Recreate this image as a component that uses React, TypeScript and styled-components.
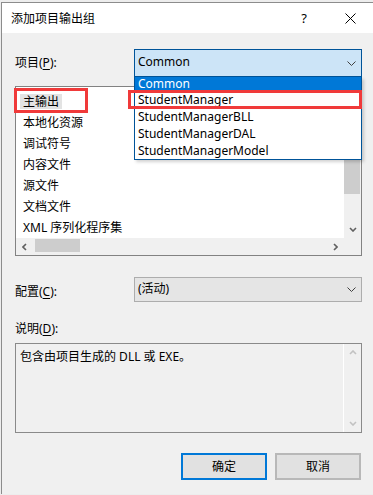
import React from 'react';
import styled, { createGlobalStyle } from 'styled-components';

const GlobalStyle = createGlobalStyle`
  html, body {
    margin: 0;
    padding: 0;
    background: #ededed;
  }
  body {
    font-family: "Noto Sans", "Noto Sans CJK SC", sans-serif;
    font-size: 12px;
    color: #000;
  }
`;

const projects = ['Common', 'StudentManager', 'StudentManagerBLL', 'StudentManagerDAL', 'StudentManagerModel'];
const outputs = ['主输出', '本地化资源', '调试符号', '内容文件', '源文件', '文档文件', 'XML 序列化程序集'];

type Dir = 'up' | 'down' | 'left' | 'right';

const Chevron = ({ dir, color = '#606060', width = 1.6 }: { dir: Dir; color?: string; width?: number }) => {
  const pts: Record<Dir, string> = {
    down: '1,1 4,4 7,1',
    up: '1,4 4,1 7,4',
    right: '1,1 4,4 1,7',
    left: '4,1 1,4 4,7',
  };
  const horizontal = dir === 'left' || dir === 'right';
  return (
    <svg width={horizontal ? 5 : 8} height={horizontal ? 8 : 5} viewBox={horizontal ? '0 0 5 8' : '0 0 8 5'}>
      <polyline points={pts[dir]} fill="none" stroke={color} strokeWidth={width} />
    </svg>
  );
};

const ComboArrow = () => (
  <svg width="9" height="5" viewBox="0 0 9 5">
    <polyline points="0.5,0.5 4.5,4.5 8.5,0.5" fill="none" stroke="#404040" strokeWidth="1" />
  </svg>
);

const App = () => {
  return (
    <>
      <GlobalStyle />
      <Window>
        <TitleBar>
          <Title>添加项目输出组</Title>
          <CaptionButton>?</CaptionButton>
          <CaptionButton>
            <svg width="11" height="11" viewBox="0 0 11 11">
              <line x1="0.5" y1="0.5" x2="10.5" y2="10.5" stroke="#000" strokeWidth="1" />
              <line x1="10.5" y1="0.5" x2="0.5" y2="10.5" stroke="#000" strokeWidth="1" />
            </svg>
          </CaptionButton>
        </TitleBar>

        <Body>
          <FieldRow>
            <Label>
              项目(<u>P</u>):
            </Label>
            <ComboWrap>
              <Combo $open>
                <span>Common</span>
                <ComboArrow />
              </Combo>
              <DropList>
                {projects.map((p, i) => (
                  <DropItem key={p} $active={i === 0}>
                    {p}
                  </DropItem>
                ))}
              </DropList>
              <Mark style={{ left: -6, top: 41, width: 234, height: 19 }} />
            </ComboWrap>
          </FieldRow>

          <ListBox>
            <ListItems>
              {outputs.map((o, i) => (
                <ListRow key={o}>
                  <ListText $selected={i === 0}>{o}</ListText>
                </ListRow>
              ))}
            </ListItems>
            <VScroll>
              <ScrollArrow>
                <Chevron dir="up" />
              </ScrollArrow>
              <VThumb />
              <Track />
              <ScrollArrow>
                <Chevron dir="down" />
              </ScrollArrow>
            </VScroll>
            <HScroll>
              <ScrollArrow>
                <Chevron dir="left" />
              </ScrollArrow>
              <HThumb />
              <Track />
              <ScrollArrow>
                <Chevron dir="right" />
              </ScrollArrow>
            </HScroll>
            <Corner />
            <Mark style={{ left: -2, top: 1, width: 74, height: 25 }} />
          </ListBox>

          <FieldRow $config>
            <Label $low>
              配置(<u>C</u>):
            </Label>
            <ComboWrap>
              <Combo>
                <span>(活动)</span>
                <ComboArrow />
              </Combo>
            </ComboWrap>
          </FieldRow>

          <SectionLabel>
            说明(<u>D</u>):
          </SectionLabel>
          <DescBox>
            <DescText>包含由项目生成的 DLL 或 EXE。</DescText>
            <DescScroll>
              <ScrollArrow>
                <Chevron dir="up" color="#c2c2c2" />
              </ScrollArrow>
              <Track />
              <ScrollArrow>
                <Chevron dir="down" color="#c2c2c2" />
              </ScrollArrow>
            </DescScroll>
          </DescBox>

          <Buttons>
            <Button $primary>确定</Button>
            <Button>取消</Button>
          </Buttons>
        </Body>
      </Window>
    </>
  );
};

export default App;

const Window = styled.div`
  margin: 2px 0 0 1px;
  border-left: 1px solid #8c8c8c;
  border-top: 1px solid #8c8c8c;
  background: #f0f0f0;
  height: calc(100vh - 3px);
  overflow: hidden;
  box-sizing: border-box;
`;

const TitleBar = styled.div`
  height: 30px;
  background: #fff;
  display: flex;
  align-items: center;
  padding-left: 9px;
`;

const Title = styled.div`
  flex: 1;
  font-family: "Noto Sans CJK SC", sans-serif;
  font-size: 12px;
  line-height: 16px;
`;

const CaptionButton = styled.div`
  width: 46px;
  height: 30px;
  display: flex;
  align-items: center;
  justify-content: center;
  font-size: 13px;
  color: #000;
`;

const Body = styled.div`
  padding: 16px 11px 0 13px;
  display: flex;
  flex-direction: column;
`;

const FieldRow = styled.div<{ $config?: boolean }>`
  display: flex;
  align-items: center;
  height: ${(p) => (p.$config ? '25px' : '28px')};
  margin-top: ${(p) => (p.$config ? '21px' : '0')};
`;

const Label = styled.div<{ $low?: boolean }>`
  width: 119px;
  line-height: 16px;
  padding-top: ${(p) => (p.$low ? '4px' : '0')};
  u {
    text-underline-offset: 2px;
  }
`;

const SectionLabel = styled.div`
  margin-top: 19px;
  line-height: 16px;
  u {
    text-underline-offset: 2px;
  }
`;

const ComboWrap = styled.div`
  position: relative;
  flex: 1;
  height: 100%;
`;

const Combo = styled.div<{ $open?: boolean }>`
  height: 100%;
  box-sizing: border-box;
  display: flex;
  align-items: center;
  justify-content: space-between;
  padding: 0 5px 0 3px;
  border: 1px solid ${(p) => (p.$open ? '#005499' : '#adadad')};
  background: ${(p) => (p.$open ? '#cce4f7' : '#e5e5e5')};
  line-height: 16px;
  span {
    padding-bottom: 2px;
  }
`;

const DropList = styled.div`
  position: absolute;
  top: 100%;
  left: 0;
  right: 0;
  z-index: 2;
  background: #fff;
  border: 1px solid #005499;
  border-top: none;
  box-shadow: 2px 2px 3px rgba(0, 0, 0, 0.18);
`;

const DropItem = styled.div<{ $active?: boolean }>`
  height: 17px;
  line-height: 17px;
  padding-left: 3px;
  background: ${(p) => (p.$active ? '#0078d7' : '#fff')};
  color: ${(p) => (p.$active ? '#fff' : '#000')};
  &:first-child {
    height: 14px;
    line-height: 14px;
  }
`;

const Mark = styled.div`
  position: absolute;
  box-sizing: border-box;
  border: 3px solid #f03a3a;
  z-index: 3;
  pointer-events: none;
`;

const ListBox = styled.div`
  position: relative;
  margin-top: 9px;
  height: 170px;
  box-sizing: border-box;
  border: 1px solid #828282;
  background: #fff;
  display: grid;
  grid-template-columns: 1fr 17px;
  grid-template-rows: 1fr 17px;
`;

const ListItems = styled.div`
  padding-top: 4px;
  overflow: hidden;
`;

const ListRow = styled.div`
  height: 21px;
  display: flex;
  align-items: center;
  padding-left: 4px;
`;

const ListText = styled.span<{ $selected?: boolean }>`
  height: 15px;
  line-height: 15px;
  padding: 0 3px;
  background: ${(p) => (p.$selected ? '#e3e3e3' : 'transparent')};
  white-space: nowrap;
`;

const VScroll = styled.div`
  background: #f0f0f0;
  display: flex;
  flex-direction: column;
`;

const HScroll = styled.div`
  background: #f0f0f0;
  display: flex;
`;

const ScrollArrow = styled.div`
  width: 17px;
  height: 17px;
  flex: none;
  display: flex;
  align-items: center;
  justify-content: center;
`;

const Track = styled.div`
  flex: 1;
`;

const VThumb = styled.div`
  height: 90px;
  background: #cdcdcd;
  margin-right: 1px;
`;

const HThumb = styled.div`
  width: 45px;
  margin: 1px 0 3px 2px;
  background: #cdcdcd;
`;

const Corner = styled.div`
  background: #f0f0f0;
`;

const DescBox = styled.div`
  margin-top: 6px;
  height: 90px;
  box-sizing: border-box;
  border: 1px solid #8a8a8a;
  background: #f0f0f0;
  display: flex;
`;

const DescText = styled.div`
  flex: 1;
  padding: 5px 0 0 4px;
  line-height: 16px;
`;

const DescScroll = styled.div`
  width: 17px;
  border-left: 1px solid #fff;
  display: flex;
  flex-direction: column;
`;

const Buttons = styled.div`
  margin-top: 20px;
  display: flex;
  justify-content: flex-end;
  gap: 8px;
  padding-right: 1px;
`;

const Button = styled.div<{ $primary?: boolean }>`
  width: 86px;
  height: 27px;
  box-sizing: border-box;
  display: flex;
  align-items: center;
  justify-content: center;
  background: #e1e1e1;
  border: 2px solid ${(p) => (p.$primary ? '#0078d7' : '#b8b8b8')};
  line-height: 16px;
`;
